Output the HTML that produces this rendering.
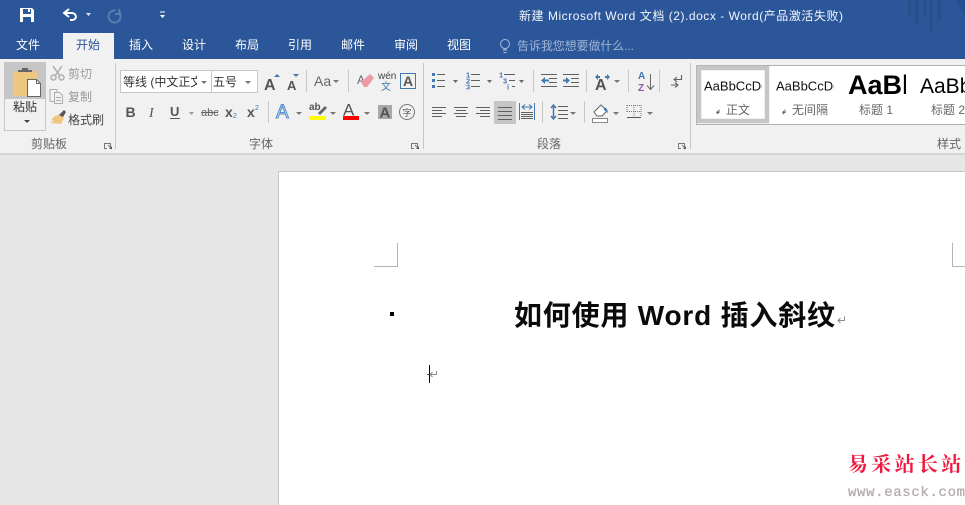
<!DOCTYPE html>
<html lang="zh"><head><meta charset="utf-8"><title>Word</title>
<style>
html,body{margin:0;padding:0;width:965px;height:505px;overflow:hidden;background:#e6e6e6}
svg{display:block;position:absolute;left:0;top:0}
text{font-family:"Liberation Sans","Noto Sans CJK SC",sans-serif;font-size:12px;fill:#444}
.w{fill:#fff}.g{fill:#666}
.d{fill:#9a9a9a}
.b{stroke:#4478b0;fill:none}
.l{stroke:#5f5f5f;stroke-width:1.1;fill:none}
</style></head><body>
<svg width="965" height="505" viewBox="0 0 965 505" xmlns="http://www.w3.org/2000/svg">
<defs>
<clipPath id="c1"><rect x="122" y="70" width="75" height="23"/></clipPath>
<clipPath id="c2"><rect x="703" y="72" width="59" height="30"/></clipPath>
<clipPath id="c3"><rect x="775" y="72" width="59" height="30"/></clipPath>
<clipPath id="c4"><rect x="847" y="68" width="59" height="34"/></clipPath>
</defs>
<!-- title bar -->
<rect width="965" height="59" fill="#2b579a"/>
<g fill="#27508e"><rect x="908" y="0" width="3" height="16"/><rect x="915" y="0" width="4" height="24"/><rect x="923" y="0" width="3" height="16"/><rect x="930" y="0" width="3" height="32"/><rect x="937" y="0" width="4" height="21"/><path d="M955 0h10v16z"/></g>
<!-- QAT -->
<path d="M20 8h12l2 2v12H20z" fill="#fff"/><rect x="23" y="9" width="8" height="5" fill="#2b579a"/><rect x="23" y="17" width="8" height="5" fill="#2b579a"/><rect x="28" y="9" width="2" height="3" fill="#fff"/>
<path d="M69 9l-5 4 5 4M64 13h8a4 4 0 0 1 4 4 4 4 0 0 1-4 3h-2" stroke="#fff" stroke-width="2" fill="none"/>
<path d="M86 13h5l-2.500 3z" fill="#dfe6f0"/>
<path d="M120 8l1 5-5 0M120.500 12a6 6 0 1 1-4-2.500" stroke="#5a7db0" stroke-width="2" fill="none" transform="translate(-1 1)"/>
<path d="M160 12h5" stroke="#fff"/><path d="M160 15h5l-2.500 3z" fill="#fff"/>
<text x="519" y="20" class="w" style="fill:#f2f5fa" textLength="324">新建 Microsoft Word 文档 (2).docx - Word(产品激活失败)</text>
<!-- tabs -->
<rect x="63" y="33" width="51" height="26" fill="#f1f1f1"/>
<text x="16" y="49" class="w">文件</text>
<text x="76" y="49" style="fill:#2b579a">开始</text>
<text x="129" y="49" class="w">插入</text><text x="182" y="49" class="w">设计</text><text x="235" y="49" class="w">布局</text><text x="288" y="49" class="w">引用</text><text x="341" y="49" class="w">邮件</text><text x="394" y="49" class="w">审阅</text><text x="447" y="49" class="w">视图</text>
<circle cx="505" cy="44" r="4.500" fill="none" stroke="#a9bcd8"/><path d="M503 50h4M503.500 52.500h3M504 48v2M506 48v2" stroke="#a9bcd8"/>
<text x="517" y="50" style="fill:#9fb4d3" textLength="117">告诉我您想要做什么...</text>
<!-- ribbon -->
<rect y="59" width="965" height="94" fill="#f1f1f1"/>
<rect y="153" width="965" height="2" fill="#d4d4d4"/>
<rect y="155" width="965" height="350" fill="#e6e6e6"/>
<path d="M115.500 63v86M423.500 63v86M690.500 63v86" stroke="#c6c6c6"/>
<!-- paste -->
<rect x="4.500" y="62.500" width="41" height="68" fill="#f1f1f1" stroke="#c6c6c6"/>
<rect x="5" y="63" width="40" height="36" fill="#c6c6c6"/>
<rect x="13" y="71" width="24" height="25" fill="#edc67f"/>
<path d="M18 72v-2h4v-2h6v2h4v2z" fill="#666"/>
<path d="M27.500 79.500h9l4 4v13h-13z" fill="#fff" stroke="#666"/><path d="M36.500 79.500v4h4" fill="none" stroke="#666"/>
<text x="13" y="111" style="fill:#333">粘贴</text>
<path d="M24 120h6l-3 3z" fill="#444"/>
<!-- clipboard small -->
<g stroke="#aeaeae" stroke-width="1.500" fill="none"><path d="M53 66l7 10M62 66l-7 10"/><circle cx="53.500" cy="77.500" r="2.500"/><circle cx="61.500" cy="77.500" r="2.500"/></g>
<text x="68" y="78" class="d">剪切</text>
<g stroke="#aeaeae" fill="none"><path d="M50 89.500h7v12h-7z"/><path d="M54.500 92.500h5l3 3v8h-8z" fill="#f1f1f1"/><path d="M56 97.500h5M56 100.500h5"/></g>
<text x="68" y="101" class="d">复制</text>
<path d="M55 116l6-2 3 4-3 6-11-1 4-2-3-1z" fill="#edc67f"/><path d="M59 115l5-5 2 2-3 5z" fill="#555"/>
<text x="68" y="124" style="fill:#444">格式刷</text>
<text x="31" y="148" class="g">剪贴板</text>
<!-- launchers -->
<g fill="none" stroke="#777"><path d="M107 148.500h-2.500v-5h6v3M108 145l3 3"/><path d="M414 148.500h-2.500v-5h6v3M415 145l3 3"/><path d="M681 148.500h-2.500v-5h6v3M682 145l3 3"/></g>
<path d="M109 149h3v-3zM416 149h3v-3zM683 149h3v-3z" fill="#555"/>
<!-- font -->
<rect x="120.500" y="70.500" width="91" height="22" fill="#fff" stroke="#c6c6c6"/>
<rect x="211.500" y="70.500" width="46" height="22" fill="#fff" stroke="#c6c6c6"/>
<text x="123" y="86" clip-path="url(#c1)" style="fill:#333">等线 (中文正文)</text>
<path d="M201 81h6l-3 3zM245 81h6l-3 3z" fill="#777"/>
<text x="213" y="86" style="fill:#333">五号</text>
<text x="264" y="90" style="font-size:16px;font-weight:bold;fill:#555">A</text><path d="M274 77h6l-3-3z" fill="#4478b0"/>
<text x="287" y="90" style="font-size:13px;font-weight:bold;fill:#555">A</text><path d="M293 74h6l-3 3z" fill="#4478b0"/>
<path d="M306.500 70v22" stroke="#c6c6c6"/>
<text x="314" y="86" style="font-size:14px;fill:#666">Aa</text><path d="M333 80h6l-3 3z" fill="#777"/>
<path d="M348.500 70v22" stroke="#c6c6c6"/>
<text x="357" y="84" style="font-size:12px;fill:#666">A</text><path d="M361 82l9-8 4 4-7 9h-3z" fill="#ea9aa0"/>
<text x="378" y="79" style="font-size:10px;fill:#444">wén</text><text x="381" y="90" style="font-size:10px;fill:#4478b0">文</text>
<rect x="400.500" y="73.500" width="15" height="15" fill="none" stroke="#4478b0"/>
<text x="403" y="86" style="font-size:14px;font-weight:bold;fill:#555">A</text>
<!-- font row 2 -->
<text x="125.500" y="117" style="font-size:14px;font-weight:bold;fill:#555">B</text>
<text x="149" y="117" style="font-size:14px;font-style:italic;font-family:'Liberation Serif',serif;fill:#555">I</text>
<text x="170" y="116" style="font-size:13px;font-weight:bold;fill:#555">U</text><path d="M170 118.500h10" stroke="#555"/>
<path d="M189 112h5l-2.500 3z" fill="#999"/>
<text x="201" y="116" style="font-size:11px;fill:#666">abc</text><path d="M201 112.500h17" stroke="#666"/>
<text x="225" y="117" style="font-size:14px;font-weight:bold;fill:#555">x</text><text x="233" y="118" style="font-size:7px;fill:#4478b0">2</text>
<text x="247" y="117" style="font-size:14px;font-weight:bold;fill:#555">x</text><text x="255" y="110" style="font-size:7px;fill:#4478b0">2</text>
<path d="M268.500 101v22" stroke="#c6c6c6"/>
<text x="276" y="118" style="font-size:19px;fill:#dce8f5;stroke:#4f8ac9;stroke-width:1">A</text>
<path d="M296 112h6l-3 3z" fill="#777"/>
<text x="309" y="110" style="font-size:10px;font-weight:bold;fill:#555">ab</text><path d="M318 113l7-7 2 2-7 7z" fill="#666"/>
<rect x="309" y="116" width="17" height="4" fill="#ff0"/>
<path d="M330 112h6l-3 3z" fill="#777"/>
<text x="343" y="115.500" style="font-size:17px;fill:#555">A</text>
<rect x="343" y="116" width="16" height="4" fill="#f00"/>
<path d="M364 112h6l-3 3z" fill="#777"/>
<rect x="378" y="105" width="14" height="14" fill="#a8a8a8"/><text x="379.500" y="117.500" style="font-size:15px;font-weight:bold;fill:#555">A</text>
<circle cx="407" cy="112" r="7.500" fill="none" stroke="#777"/><text x="402.500" y="116" style="font-size:9px;fill:#555">字</text>
<text x="249" y="148" class="g">字体</text>
<!-- paragraph row 1 -->
<g fill="#4478b0"><rect x="432" y="73" width="3" height="3"/><rect x="432" y="79" width="3" height="3"/><rect x="432" y="85" width="3" height="3"/></g>
<path d="M437 74.500h8M437 80.500h8M437 86.500h8M471 74.500h9M471 80.500h9M471 86.500h9M504 74.500h11M509 80.500h6M512 86.500h3" class="l"/>
<text x="466" y="77.500" style="font-size:7.500px;fill:#4478b0;font-weight:bold">1</text><text x="466" y="83.500" style="font-size:7.500px;fill:#4478b0;font-weight:bold">2</text><text x="466" y="89.500" style="font-size:7.500px;fill:#4478b0;font-weight:bold">3</text>
<text x="499" y="77.500" style="font-size:7.500px;fill:#4478b0;font-weight:bold">1</text><text x="503" y="83.500" style="font-size:7.500px;fill:#4478b0;font-weight:bold">3</text><text x="507" y="89.500" style="font-size:7.500px;fill:#4478b0;font-weight:bold">i</text>
<path d="M453 80h5l-2.500 3zM487 80h5l-2.500 3zM519 80h5l-2.500 3z" fill="#666"/>
<path d="M533.500 70v22M586.500 70v22M628.500 70v22M659.500 70v22" stroke="#c6c6c6"/>
<path d="M541 74.500h16M549 78.500h8M549 82.500h8M541 86.500h16M563 74.500h16M571 78.500h8M571 82.500h8M563 86.500h16" class="l"/>
<path d="M541 80.500l4-3.500v2.500h4v2h-4v2.500z" fill="#4478b0"/>
<path d="M570 80.500l-4-3.500v2.500h-3v2h3v2.500z" fill="#4478b0"/>
<text x="595" y="90" style="font-size:16px;font-weight:bold;fill:#555">A</text>
<path d="M595 77l3-3v2h2v2h-2v2zM610 77l-3-3v2h-2v2h2v2z" fill="#4478b0"/>
<path d="M614 80h6l-3 3z" fill="#777"/>
<text x="638" y="79" style="font-size:10px;font-weight:bold;fill:#4478b0">A</text><text x="638" y="91" style="font-size:10px;font-weight:bold;fill:#8a5aa8">Z</text>
<path d="M650.500 74v15M647 85.500l3.500 4 3.500-4" stroke="#666" fill="none"/>
<path d="M681.500 75v4.500h-7M677 77l-3 2.500 3 2.500M671 85h7M675 82.500l3 2.500-3 2.500" class="l"/>
<!-- paragraph row 2 -->
<path d="M432 107.500h14M432 110.500h10M432 113.500h14M432 116.500h10M454 107.500h14M456 110.500h10M454 113.500h14M456 116.500h10M476 107.500h14M480 110.500h10M476 113.500h14M480 116.500h10" class="l"/>
<rect x="494" y="101" width="22" height="23" fill="#c6c6c6"/>
<path d="M498 107.500h14M498 111.500h14M498 115.500h14M498 119.500h14" class="l"/>
<path d="M519.500 103v17M534.500 103v17" stroke="#4478b0"/>
<path d="M521 112.500h12M521 114.500h12M521 116.500h12M521 118.500h12" class="l"/>
<path d="M522 107h10M525 104.500l-3 2.500 3 2.500M529 104.500l3 2.500-3 2.500" class="b"/>
<path d="M542.500 101v22M584.500 101v22" stroke="#c6c6c6"/>
<path d="M553.500 105v14M551 108l2.500-3 2.500 3M551 116l2.500 3 2.500-3" class="b" stroke-width="1.500"/>
<path d="M558 106.500h10M558 110.500h10M558 114.500h10M558 118.500h10" class="l"/>
<path d="M570 112h6l-3 3z" fill="#777"/>
<path d="M594 112l7-7 6 6-5 5h-5z" fill="#fff" stroke="#666"/><path d="M604 107l3 2 1 4-4-3z" fill="#4478b0"/>
<rect x="592.500" y="118.500" width="15" height="4" fill="#fff" stroke="#888"/>
<path d="M613 112h6l-3 3z" fill="#777"/>
<path d="M627 105.500h14M627 111.500h14M634 105v12M627 105v7M641 105v12" stroke="#777" stroke-dasharray="1 1" fill="none"/>
<path d="M627 117.500h14" stroke="#555"/>
<path d="M647 112h6l-3 3z" fill="#777"/>
<text x="537" y="148" class="g">段落</text>
<!-- styles -->
<rect x="696.500" y="65.500" width="270" height="59" fill="#fff" stroke="#b0b0b0"/>
<rect x="699" y="68" width="68" height="53" fill="none" stroke="#c6c6c6" stroke-width="4.500"/>
<text x="704" y="90.500" clip-path="url(#c2)" style="font-size:13px;fill:#111">AaBbCcDd</text>
<text x="776" y="90.500" clip-path="url(#c3)" style="font-size:13px;fill:#111">AaBbCcDd</text>
<text x="848" y="94" clip-path="url(#c4)" style="font-size:27px;font-weight:bold;fill:#000">AaBb</text>
<text x="920" y="93" style="font-size:21px;fill:#000">AaBb</text>
<path d="M719 109.500v3h-2.500M716.500 112.500l1.500-1.500M716.500 112.500l1.500 1.500M785 109.500v3h-2.500M782.500 112.500l1.500-1.500M782.500 112.500l1.500 1.500" stroke="#666" fill="none"/>
<text x="726" y="114" class="g">正文</text><text x="792" y="114" class="g">无间隔</text>
<text x="859" y="114" class="g">标题 1</text><text x="931" y="114" class="g">标题 2</text>
<text x="937" y="148" class="g">样式</text>
<!-- page -->
<rect x="278.500" y="171.500" width="700" height="340" fill="#fff" stroke="#c6c6c6"/>
<path d="M374 266.500h23.500V243M952.500 243v23.500H965" fill="none" stroke="#b4b4b4"/>
<rect x="390" y="312" width="4" height="4" fill="#000"/>
<text x="514" y="325" style="font-size:28px;font-weight:bold;fill:#0a0a0a" textLength="321">如何使用 Word 插入斜纹</text>
<path d="M844.500 316.500v4h-6M840.500 318l-2.500 2.500 2.500 2.500" stroke="#8a8a8a" fill="none"/>
<rect x="429" y="365" width="1" height="18" fill="#000"/>
<rect x="427" y="374" width="2" height="1" fill="#555"/>
<path d="M436.500 371v3.500h-6M432.500 372l-2.500 2.500 2.500 2.500" stroke="#8a8a8a" fill="none"/>
<!-- watermark -->
<text x="848" y="471" style="font-family:'Noto Serif CJK SC',serif;font-size:20px;font-weight:bold;fill:#f0163c;letter-spacing:3.300px">易采站长站</text>
<text x="848" y="496" style="font-family:'Liberation Mono',monospace;font-size:14px;fill:#b5adad;letter-spacing:.65px;stroke:#b5adad;stroke-width:.3">www.easck.com</text>
</svg>
</body></html>
